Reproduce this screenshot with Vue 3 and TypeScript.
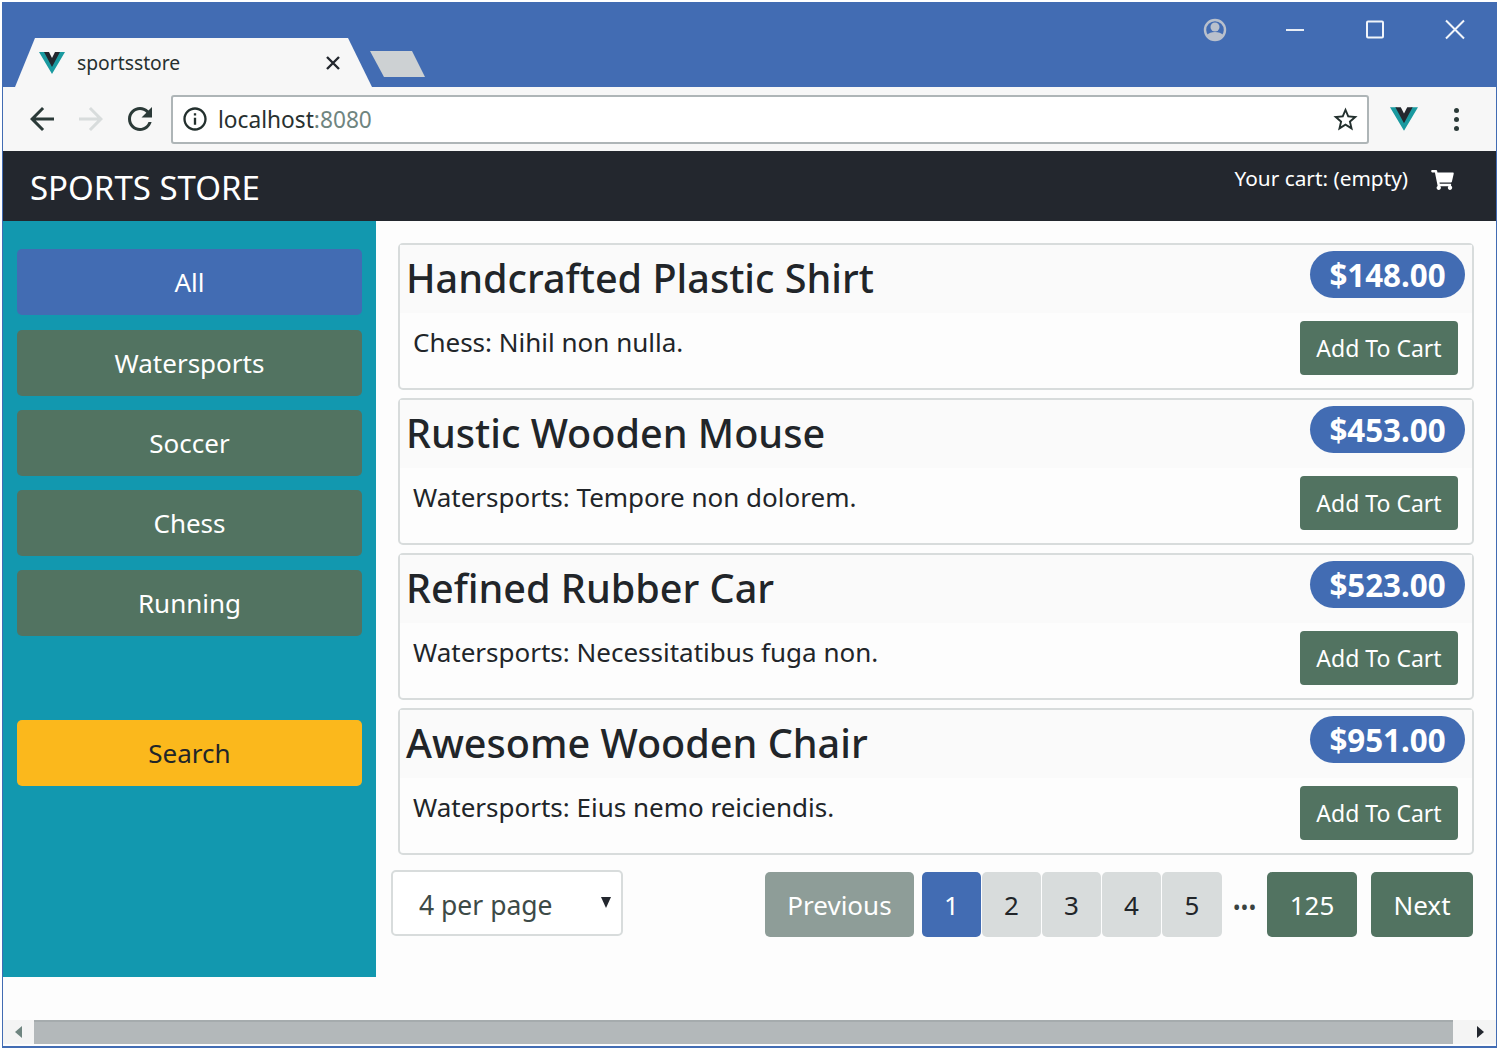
<template>
  <div class="window">
    <!-- browser chrome -->
    <div class="titlebar">
      <div class="tab">
        <svg class="favicon" viewBox="0 0 26 22"><path d="M0 0h6l7 12L20 0h6L13 22z" fill="#1a9aa0"/><path d="M5 0h5l3 6 3-6h5L13 15z" fill="#23272e"/></svg>
        <span class="tab-title">sportsstore</span>
        <svg class="tab-close" viewBox="0 0 14 14"><path d="M1 1l12 12M13 1L1 13" stroke="#23272e" stroke-width="2.4" fill="none"/></svg>
      </div>
      <div class="new-tab"></div>
      <div class="win-controls">
        <svg class="ctl" viewBox="0 0 24 24"><circle cx="12" cy="12" r="10" fill="none" stroke="#b9c0cc" stroke-width="2.4"/><circle cx="12" cy="9" r="4.5" fill="#b9c0cc"/><path d="M4 17c3-4 13-4 16 0l-3 4H7z" fill="#b9c0cc"/></svg>
        <svg class="ctl" viewBox="0 0 24 24"><path d="M3 12h18" stroke="#e8edf5" stroke-width="2"/></svg>
        <svg class="ctl" viewBox="0 0 24 24"><rect x="4" y="3.500" width="16" height="16" rx="1" fill="none" stroke="#f2f5fa" stroke-width="2"/></svg>
        <svg class="ctl" viewBox="0 0 24 24"><path d="M3 2.500l18 18M21 2.500l-18 18" stroke="#f2f5fa" stroke-width="2" fill="none"/></svg>
      </div>
    </div>
    <div class="toolbar">
      <svg class="tool" viewBox="0 0 24 24"><path d="M20 11H7.830l5.590-5.590L12 4l-8 8 8 8 1.410-1.410L7.830 13H20v-2z" fill="#2b3a38"/></svg>
      <svg class="tool" viewBox="0 0 24 24"><path d="M4 11h12.170l-5.590-5.590L12 4l8 8-8 8-1.410-1.410L16.170 13H4v-2z" fill="#d8dcdc"/></svg>
      <svg class="tool" viewBox="0 0 24 24"><path d="M17.650 6.350C16.200 4.900 14.210 4 12 4c-4.420 0-7.990 3.580-7.990 8s3.570 8 7.990 8c3.730 0 6.840-2.550 7.730-6h-2.080c-.82 2.330-3.040 4-5.650 4-3.310 0-6-2.690-6-6s2.690-6 6-6c1.660 0 3.140.69 4.220 1.780L13 11h7V4l-2.350 2.350z" fill="#2b3a38"/></svg>
      <div class="omnibox">
        <svg class="info" viewBox="0 0 24 24"><path d="M11 7h2v2h-2zm0 4h2v6h-2zm1-9C6.480 2 2 6.480 2 12s4.480 10 10 10 10-4.480 10-10S17.520 2 12 2zm0 18c-4.410 0-8-3.590-8-8s3.590-8 8-8 8 3.590 8 8-3.590 8-8 8z" fill="#23302e"/></svg>
        <span class="url">localhost<span class="port">:8080</span></span>
        <svg class="star" viewBox="0 0 24 24"><path d="M22 9.240l-7.190-.62L12 2 9.190 8.630 2 9.240l5.460 4.730L5.820 21 12 17.270 18.180 21l-1.630-7.030L22 9.240zM12 15.400l-3.760 2.270 1-4.280-3.320-2.880 4.380-.38L12 6.100l1.710 4.040 4.380.38-3.320 2.880 1 4.280L12 15.400z" fill="#23302e"/></svg>
      </div>
      <svg class="ext" viewBox="0 0 26 22"><path d="M0 0h6l7 12L20 0h6L13 22z" fill="#1a9aa0"/><path d="M5 0h5l3 6 3-6h5L13 15z" fill="#23272e"/></svg>
      <div class="kebab"><i></i><i></i><i></i></div>
    </div>

    <!-- app -->
    <header class="navbar">
      <span class="brand">SPORTS STORE</span>
      <div class="cart">
        <span>Your cart: (empty)</span>
        <svg class="cart-icon" viewBox="0 0 576 512"><path d="M528.120 301.319l47.273-208C578.806 78.301 567.391 64 551.990 64H159.208l-9.166-44.810C147.758 8.021 137.930 0 126.529 0H24C10.745 0 0 10.745 0 24v16c0 13.255 10.745 24 24 24h69.883l70.248 343.435C147.325 417.100 136 435.222 136 456c0 30.928 25.072 56 56 56s56-25.072 56-56c0-15.674-6.447-29.835-16.824-40h209.647C430.447 426.165 424 440.326 424 456c0 30.928 25.072 56 56 56s56-25.072 56-56c0-22.172-12.888-41.332-31.579-50.405l5.517-24.276c3.413-15.018-8.002-29.319-23.403-29.319H218.117l-6.545-32h293.145c11.206 0 20.920-7.754 23.403-18.681z" fill="#fff"/></svg>
      </div>
    </header>

    <div class="content">
      <aside class="sidebar">
        <button class="side-btn all">All</button>
        <button v-for="c in categories" :key="c" class="side-btn cat">{{ c }}</button>
        <button class="side-btn search">Search</button>
      </aside>

      <main class="main">
        <div v-for="p in products" :key="p.name" class="card">
          <div class="card-head">
            <h4>{{ p.name }}</h4>
            <span class="price">{{ p.price }}</span>
          </div>
          <div class="card-body">
            <span class="desc">{{ p.desc }}</span>
            <button class="add">Add To Cart</button>
          </div>
        </div>

        <div class="pager-row">
          <div class="select-wrap">
            <select class="per-page">
              <option>4 per page</option>
              <option>8 per page</option>
            </select>
            <span class="caret"></span>
          </div>
          <div class="pager">
            <button class="pg prev">Previous</button>
            <button class="pg active">1</button>
            <button v-for="n in pages" :key="n" class="pg num">{{ n }}</button>
            <span class="dots">•••</span>
            <button class="pg last">125</button>
            <button class="pg next">Next</button>
          </div>
        </div>
      </main>
    </div>

    <div class="spacer"></div>

    <div class="scrollbar">
      <span class="arrow left"></span>
      <div class="thumb"></div>
      <span class="arrow right"></span>
    </div>
  </div>
</template>

<script setup lang="ts">
interface Product {
  name: string;
  price: string;
  desc: string;
}

const categories: string[] = ['Watersports', 'Soccer', 'Chess', 'Running'];
const pages: number[] = [2, 3, 4, 5];

const products: Product[] = [
  { name: 'Handcrafted Plastic Shirt', price: '$148.00', desc: 'Chess: Nihil non nulla.' },
  { name: 'Rustic Wooden Mouse', price: '$453.00', desc: 'Watersports: Tempore non dolorem.' },
  { name: 'Refined Rubber Car', price: '$523.00', desc: 'Watersports: Necessitatibus fuga non.' },
  { name: 'Awesome Wooden Chair', price: '$951.00', desc: 'Watersports: Eius nemo reiciendis.' },
];
</script>

<style>
html, body {
  margin: 0;
  background: #fff;
  overflow: hidden;
}
</style>

<style scoped>
* {
  box-sizing: border-box;
}

.window {
  width: 1495px;
  height: 1046px;
  margin: 2px 0 0 2px;
  border: 1px solid #426cb3;
  border-top: 0;
  border-bottom-width: 2px;
  display: flex;
  flex-direction: column;
  font-family: "Noto Sans", "Open Sans", sans-serif;
  color: #212529;
  background: #fdfdfd;
}

.titlebar {
  height: 85px;
  flex: none;
  background: #426cb3;
  display: flex;
  align-items: flex-end;
  padding-left: 12px;
}

.tab {
  width: 357px;
  height: 49px;
  background: #f7f7f7;
  clip-path: polygon(0 100%, 20px 0, 333px 0, 357px 100%);
  display: flex;
  align-items: center;
  padding: 0 32px 0 24px;
}

.favicon {
  width: 26px;
  height: 22px;
  flex: none;
}

.tab-title {
  font-size: 19.300px;
  margin-left: 12px;
  margin-top: -1px;
  flex: 1;
  color: #27302f;
}

.tab-close {
  width: 14px;
  height: 14px;
  flex: none;
}

.new-tab {
  width: 55px;
  height: 26px;
  margin: 0 0 10px -2px;
  background: #cdd1d3;
  clip-path: polygon(0 0, 42px 0, 55px 100%, 14px 100%);
}

.win-controls {
  margin-left: auto;
  align-self: flex-start;
  display: flex;
  gap: 56px;
  padding: 16px 29px 0 0;
}

.ctl {
  width: 24px;
  height: 24px;
  display: block;
}

.toolbar {
  height: 64px;
  flex: none;
  background: #f7f7f7;
  display: flex;
  align-items: center;
  padding: 0 0 0 21px;
}

.tool {
  width: 36px;
  height: 36px;
  flex: none;
  margin-right: 13px;
}

.omnibox {
  width: 1198px;
  height: 49px;
  flex: none;
  background: #fff;
  border: 2px solid #aeb5b7;
  border-radius: 3px;
  display: flex;
  align-items: center;
  padding: 0 7px 0 8px;
}

.info {
  width: 28px;
  height: 28px;
  flex: none;
}

.url {
  font-size: 22.700px;
  margin-left: 9px;
  flex: 1;
  color: #27302f;
}

.port {
  color: #6f8580;
}

.star {
  width: 29px;
  height: 29px;
  flex: none;
}

.ext {
  width: 28px;
  height: 24px;
  flex: none;
  margin-left: 21px;
}

.kebab {
  display: flex;
  flex-direction: column;
  gap: 4px;
  margin-left: 36px;
}

.kebab i {
  width: 5px;
  height: 5px;
  border-radius: 50%;
  background: #2b3a38;
}

.navbar {
  height: 70px;
  flex: none;
  background: #23272e;
  color: #fff;
  display: flex;
  justify-content: space-between;
  padding: 0 42px 0 27px;
}

.brand {
  font-size: 33px;
  line-height: 74px;
}

.cart {
  display: flex;
  align-items: flex-start;
  gap: 23px;
  padding-top: 13px;
  font-size: 20.800px;
}

.cart-icon {
  width: 23px;
  height: 20px;
  margin-top: 6px;
}

.content {
  display: flex;
  height: 756px;
  flex: none;
}

.sidebar {
  width: 373px;
  flex: none;
  background: #1298af;
  padding: 28px 14px 0 14px;
  display: flex;
  flex-direction: column;
  gap: 14px;
}

.side-btn {
  height: 66px;
  flex: none;
  border: 0;
  border-radius: 5px;
  color: #fff;
  font: inherit;
  font-size: 26px;
  padding: 0;
}

.all {
  background: #426cb3;
  margin-bottom: 1px;
}

.cat {
  background: #527361;
}

.search {
  background: #fbb81c;
  color: #212529;
  margin-top: 70px;
}

.main {
  flex: 1;
  padding: 22px 23px 0 15px;
  min-width: 0;
  background: #fdfdfd;
}

.card {
  height: 147px;
  margin: 0 -1px 8px 7px;
  border: 2px solid #d8dcdc;
  border-radius: 5px;
  display: flex;
  flex-direction: column;
}

.card-head {
  height: 68px;
  flex: none;
  background: #fafafa;
  display: flex;
  justify-content: space-between;
  align-items: flex-start;
  padding: 6px 7px 0 6px;
}

h4 {
  margin: 0;
  font-size: 39.600px;
  font-weight: 500;
  line-height: 54px;
}

.price {
  width: 155px;
  height: 47px;
  border-radius: 24px;
  background: #426cb3;
  color: #fff;
  font-size: 31.300px;
  font-weight: 700;
  line-height: 49px;
  text-align: center;
}

.card-body {
  flex: 1;
  display: flex;
  justify-content: space-between;
  align-items: flex-start;
  padding: 8px 14px 0 13px;
}

.desc {
  font-size: 26px;
  line-height: 44px;
  margin-top: -1px;
}

.add {
  width: 158px;
  height: 54px;
  border: 0;
  border-radius: 4px;
  background: #527361;
  color: #fff;
  font: inherit;
  font-size: 23px;
}

.pager-row {
  display: flex;
  justify-content: space-between;
  margin-top: 15px;
}

.select-wrap {
  position: relative;
  width: 232px;
  height: 66px;
}

.per-page {
  width: 100%;
  height: 100%;
  appearance: none;
  background: #fff;
  border: 2px solid #d8dcdc;
  border-radius: 5px;
  padding: 4px 0 0 26px;
  font: inherit;
  font-size: 26.500px;
  color: #3d4a47;
}

.caret {
  position: absolute;
  right: 12px;
  top: 27px;
  border-left: 5px solid transparent;
  border-right: 5px solid transparent;
  border-top: 11px solid #23272e;
}

.pager {
  display: flex;
  align-items: flex-start;
  padding-top: 2px;
}

.pg {
  height: 65px;
  border: 0;
  border-radius: 5px;
  font: inherit;
  font-size: 26px;
  color: #fff;
  padding: 0;
}

.prev {
  width: 149px;
  background: #8e9d98;
  margin-right: 8px;
}

.active {
  width: 59px;
  background: #426cb3;
  margin-right: 1px;
}

.num {
  width: 59px;
  margin-right: 1px;
  background: #d8dcdc;
  color: #212529;
}

.num:nth-last-of-type(3) {
  width: 60px;
  margin-right: 0;
}

.dots {
  width: 45px;
  text-align: center;
  font-size: 21px;
  line-height: 70px;
  color: #3a4341;
}

.last {
  width: 90px;
  background: #527361;
  margin-right: 14px;
}

.next {
  width: 102px;
  background: #527361;
}

.spacer {
  flex: 1;
}

.scrollbar {
  height: 24px;
  flex: none;
  margin-bottom: 2px;
  display: flex;
  align-items: center;
  background: #f4f4f4;
}

.thumb {
  flex: 1;
  height: 100%;
  background: #b3b8ba;
  border-top: 2px solid #a5abad;
}

.arrow {
  width: 30px;
  display: flex;
  justify-content: center;
}

.arrow::before {
  content: "";
  border-top: 6px solid transparent;
  border-bottom: 6px solid transparent;
}

.left {
  width: 31px;
}

.left::before {
  border-right: 7px solid #6f8580;
}

.right {
  width: 43px;
  padding-left: 12px;
}

.right::before {
  border-left: 7px solid #23272e;
}
</style>
